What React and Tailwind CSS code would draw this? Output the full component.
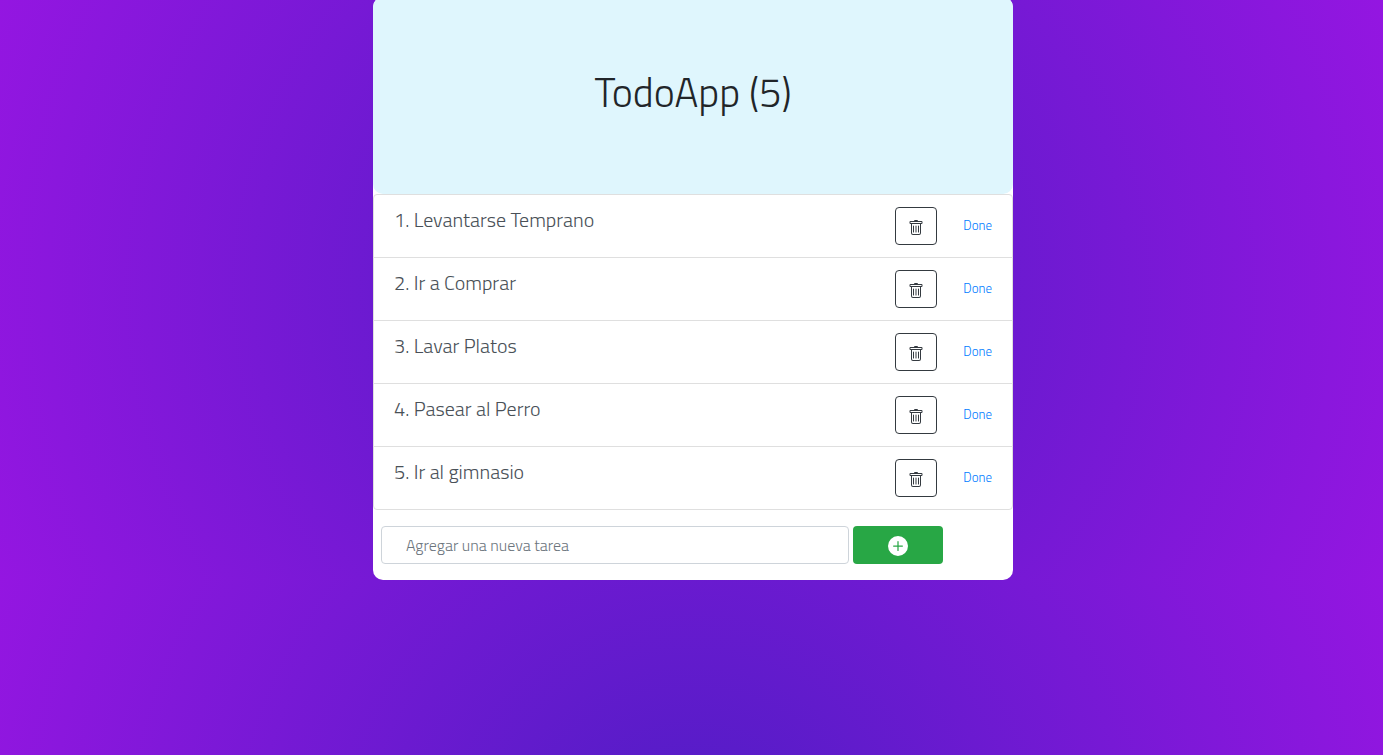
import { BsTrash, BsPlusCircleFill } from "react-icons/bs";

const todos = [
  "Levantarse Temprano",
  "Ir a Comprar",
  "Lavar Platos",
  "Pasear al Perro",
  "Ir al gimnasio",
];

function TodoItem({ index, text }) {
  return (
    <li className="flex items-start justify-between px-5 py-3">
      <p className="text-xl leading-[26px] text-[#495057]">
        {index}. {text}
      </p>
      <div className="flex items-center gap-[26px]">
        <button
          type="button"
          aria-label={`Eliminar ${text}`}
          className="flex h-[38px] w-[42px] items-center justify-center rounded border border-[#343a40] pt-1 text-[#343a40]"
        >
          <BsTrash size={16} />
        </button>
        <button type="button" className="pb-0.5 text-[13px] leading-5 text-[#007bff]">
          Done
        </button>
      </div>
    </li>
  );
}

export default function App() {
  return (
    <div className="flow-root min-h-screen bg-[radial-gradient(circle,#4e1dc4_0%,#9416e1_100%)] bg-[length:100%_580px] pl-[3px] font-['Titillium_Web',Roboto,sans-serif] font-light">
      <main className="mx-auto -mt-[3px] max-w-[640px] rounded-[10px] bg-white">
        <header className="rounded-[10px] bg-[#dff6fd] px-8 pt-[72px] pb-[77px] text-center">
          <h1 className="text-[40px] leading-[48px] text-[#212529]">TodoApp ({todos.length})</h1>
        </header>
        <ul className="divide-y divide-[#dfdfdf] rounded border border-[#dfdfdf]">
          {todos.map((text, i) => (
            <TodoItem key={text} index={i + 1} text={text} />
          ))}
        </ul>
        <form className="flex gap-1 px-2 py-4">
          <input
            type="text"
            aria-label="Agregar una nueva tarea"
            placeholder="Agregar una nueva tarea"
            className="h-[38px] w-3/4 rounded border border-[#ced4da] px-6 text-base text-[#495057] placeholder:text-[#6c757d]"
          />
          <button
            type="button"
            aria-label="Agregar"
            className="flex h-[38px] w-[90px] items-center justify-center rounded bg-[#28a745] pt-0.5 text-white"
          >
            <BsPlusCircleFill size={20} />
          </button>
        </form>
      </main>
    </div>
  );
}
